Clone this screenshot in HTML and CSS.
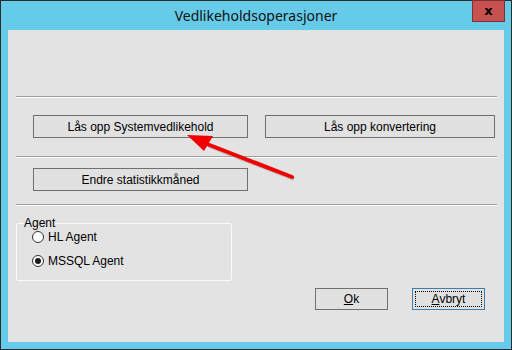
FILE: index.html
```html
<!DOCTYPE html>
<html lang="no">
  <head>
    <meta charset="UTF-8" />
    <title>Vedlikeholdsoperasjoner</title>
    <link rel="stylesheet" href="styles.css">
  </head>
  <body>
    <div class="window">
      <div class="titlebar">
        <span></span>
        <span class="title">Vedlikeholdsoperasjoner</span>
        <button class="close">x</button>
      </div>

      <div class="client">
        <div class="separator first"></div>

        <div class="row unlock-row">
          <button class="btn unlock-system">Lås opp Systemvedlikehold</button>
          <button class="btn unlock-convert">Lås opp konvertering</button>
        </div>

        <div class="separator"></div>

        <div class="row stats-row">
          <button class="btn unlock-system">Endre statistikkmåned</button>
        </div>

        <div class="separator"></div>

        <fieldset class="agent-group">
          <legend>Agent</legend>
          <label class="radio"><span class="dot"></span>HL Agent</label>
          <label class="radio checked"><span class="dot"></span>MSSQL Agent</label>
        </fieldset>

        <div class="dialog-buttons">
          <button class="btn small"><u>O</u>k</button>
          <button class="btn small focused"><span class="focus-ring"><u>A</u>vbryt</span></button>
        </div>
      </div>

      <!-- annotation arrow drawn on top of the screenshot -->
      <svg class="arrow" width="512" height="350" viewBox="0 0 512 350">
        <line x1="294" y1="179" x2="209" y2="146" stroke="#9a9a9a" stroke-width="4" opacity="0.5" />
        <line x1="292" y1="177" x2="207" y2="144" stroke="#f00000" stroke-width="4" stroke-linecap="round" />
        <polygon points="187,135 213,136 204,151" fill="#f00000" />
      </svg>
    </div>
  </body>
</html>
```

FILE: styles.css
```css
/* Global styles */
body {
  margin: 0;
  font-family: "Liberation Sans", Arial, sans-serif;
  font-size: 12px;
  color: #000;
}

.window {
  position: relative;
  width: 512px;
  height: 350px;
  box-sizing: border-box;
  border: 1px solid #2b2b2b;
  background-color: #65cbe9;
}

/* Title bar */
.titlebar {
  height: 29px;
  display: grid;
  grid-template-columns: 1fr auto 1fr;
  padding: 0 6px;
}

.title {
  font-family: "Noto Sans", "Open Sans", sans-serif;
  font-size: 14px;
  line-height: 29px;
  color: #111;
}

.close {
  justify-self: end;
  margin-top: -1px;
  width: 33px;
  height: 22px;
  box-sizing: border-box;
  border: 1px solid #7a3333;
  background-color: #c75050;
  color: #000;
  font-family: "DejaVu Sans", sans-serif;
  font-weight: bold;
  font-size: 13px;
  line-height: 18px;
  padding: 0 0 1px;
}

/* Client area */
.client {
  display: flow-root;
  margin: 0 7px;
  height: 312px;
  box-sizing: border-box;
  padding: 0 7px 0 8px;
  background-color: #e3e3e3;
}

.separator {
  height: 0;
  border-top: 1px solid #a0a0a0;
  border-bottom: 1px solid #ffffff;
}

.separator.first {
  margin-top: 66px;
}

.row {
  display: flex;
  gap: 17px;
  padding-left: 17px;
}

.unlock-row {
  margin: 17px 0 18px;
}

.stats-row {
  margin: 10px 0 13px;
}

.btn {
  height: 23px;
  box-sizing: border-box;
  border: 1px solid #707070;
  background-color: #e1e1e1;
  font-family: "Liberation Sans", Arial, sans-serif;
  font-size: 12px;
  color: #000;
  padding: 0;
}

.unlock-system {
  width: 215px;
}

.unlock-convert {
  width: 230px;
}

/* Agent group box */
.agent-group {
  margin: 12px 0 0;
  width: 216px;
  height: 63px;
  box-sizing: border-box;
  border: 1px solid #fbfbfb;
  border-radius: 2px;
  padding: 0 0 0 7px;
}

.agent-group legend {
  padding: 0;
  font-size: 12px;
  line-height: 10px;
}

.radio {
  display: flex;
  align-items: center;
  gap: 4px;
  height: 24px;
  padding-left: 8px;
}

.radio:first-of-type {
  margin-top: -3px;
}

.dot {
  width: 12px;
  height: 12px;
  box-sizing: border-box;
  border: 1px solid #333;
  border-radius: 50%;
  background-color: #fff;
  display: flex;
  align-items: center;
  justify-content: center;
}

.radio.checked .dot::after {
  content: "";
  width: 6px;
  height: 6px;
  border-radius: 50%;
  background-color: #1a1a1a;
}

/* Ok / Avbryt */
.dialog-buttons {
  display: flex;
  justify-content: flex-end;
  gap: 24px;
  margin-top: 7px;
  padding-right: 12px;
}

.btn.small {
  width: 73px;
  height: 22px;
}

.btn.focused {
  border-color: #3c7fb1;
  padding: 2px;
}

.focus-ring {
  display: block;
  height: 100%;
  box-sizing: border-box;
  border: 1px dotted #000;
  line-height: 15px;
}

.arrow {
  position: absolute;
  left: -1px;
  top: -1px;
  pointer-events: none;
}
```
